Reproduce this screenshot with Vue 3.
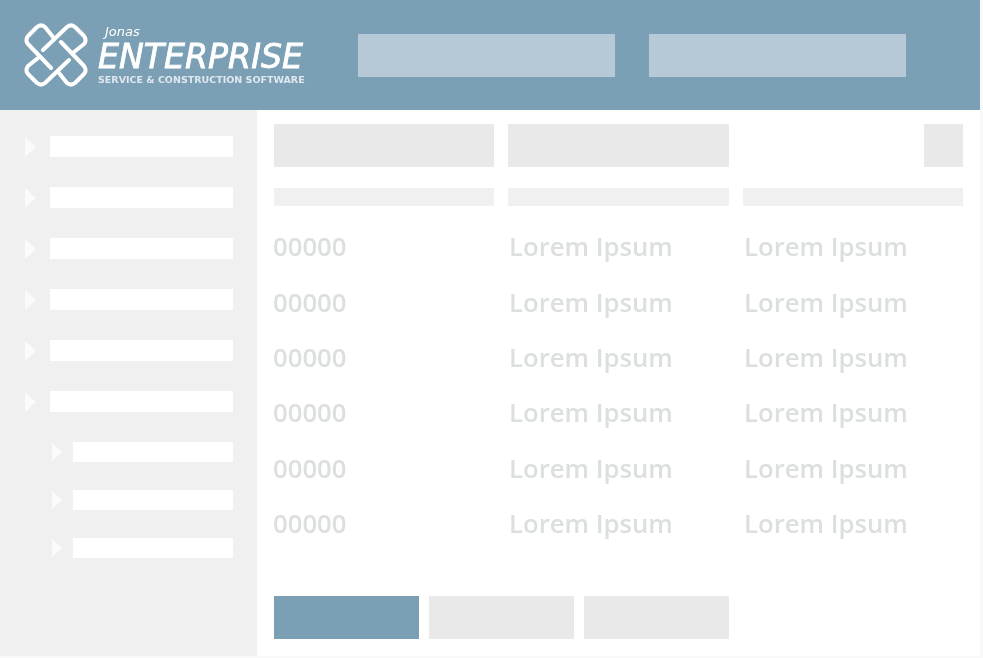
<script setup>
const sideItems = [1, 2, 3, 4, 5, 6];
const subItems = [1, 2, 3];
const rows = [1, 2, 3, 4, 5, 6];
const logoTurns = [0, 90, 180, 270];
</script>

<template>
  <div class="frame">
    <header class="topbar">
      <div class="brand">
        <svg class="logo" width="64" height="64" viewBox="0 0 64 64" fill="none" stroke="#fff" stroke-width="4" stroke-linecap="round" stroke-linejoin="round">
          <path v-for="t in logoTurns" :key="t" :transform="`rotate(${t} 32 32)`" d="M19 27 L43 4 Q47 0.8 51 4 L60 13 Q63.2 17 60 21 L50 29" />
        </svg>
        <div class="wordmark">
          <div class="jonas">Jonas</div>
          <div class="enterprise">ENTERPRISE</div>
          <div class="tagline">SERVICE &amp; CONSTRUCTION SOFTWARE</div>
        </div>
      </div>
      <div class="top-btn"></div>
      <div class="top-btn"></div>
    </header>
    <div class="body">
      <aside class="sidebar">
        <div v-for="i in sideItems" :key="i" class="side-item">
          <span class="arrow"></span>
          <span class="side-bar"></span>
        </div>
        <div class="sub-list">
          <div v-for="i in subItems" :key="i" class="sub-item">
            <span class="arrow small"></span>
            <span class="side-bar"></span>
          </div>
        </div>
      </aside>
      <main class="content">
        <div class="grid filters">
          <div class="box"></div>
          <div class="box"></div>
          <div class="box square"></div>
        </div>
        <div class="grid heads">
          <div class="head"></div>
          <div class="head"></div>
          <div class="head"></div>
        </div>
        <div class="rows">
          <div v-for="r in rows" :key="r" class="grid row">
            <span class="num">00000</span>
            <span>Lorem Ipsum</span>
            <span>Lorem Ipsum</span>
          </div>
        </div>
        <div class="actions">
          <div class="action primary"></div>
          <div class="action"></div>
          <div class="action"></div>
        </div>
      </main>
    </div>
  </div>
</template>

<style>
html, body {
  background: #f9f9f9;
}
</style>

<style scoped>
.frame {
  width: 980px;
  height: 656px;
  background: #fff;
  display: flex;
  flex-direction: column;
  overflow: hidden;
}

.topbar {
  height: 110px;
  flex: none;
  background: #7b9fb4;
  display: flex;
  align-items: center;
}

.brand {
  width: 358px;
  height: 100%;
  flex: none;
  display: flex;
  align-items: center;
  padding-left: 24px;
  box-sizing: border-box;
}

.logo {
  flex: none;
  filter: blur(0.4px);
}

.wordmark {
  margin-left: 10px;
  color: #fff;
  font-family: "DejaVu Sans", sans-serif;
  font-style: italic;
  filter: blur(0.4px);
}

.jonas {
  font-size: 13px;
  line-height: 16px;
  margin-left: 7px;
  margin-top: -1px;
  margin-bottom: 2px;
}

.enterprise {
  font-size: 33.2px;
  line-height: 30px;
  -webkit-text-stroke: 0.8px #fff;
}

.tagline {
  font-size: 9.5px;
  line-height: 13px;
  margin-top: 1px;
  font-style: normal;
  font-weight: 700;
  color: #dfe8ee;
  white-space: nowrap;
}

.top-btn {
  width: 257px;
  height: 43px;
  background: #b5cad6;
  margin-right: 34px;
}

.body {
  flex: 1;
  display: flex;
  min-height: 0;
}

.sidebar {
  width: 257px;
  flex: none;
  background: #f0f0f0;
  padding: 26px 24px 0 25px;
  box-sizing: border-box;
}

.side-item {
  height: 21px;
  margin-bottom: 30px;
  display: flex;
  align-items: center;
}

.arrow {
  width: 0;
  height: 0;
  flex: none;
  border-left: 11px solid #fbfbfb;
  border-top: 10px solid transparent;
  border-bottom: 10px solid transparent;
  margin-right: 14px;
}

.side-bar {
  flex: 1;
  height: 100%;
  background: #fff;
}

.sub-list {
  padding-left: 27px;
}

.sub-item {
  height: 20px;
  margin-bottom: 28px;
  display: flex;
  align-items: center;
}

.arrow.small {
  border-left-width: 10px;
  border-top-width: 9px;
  border-bottom-width: 9px;
  margin-right: 11px;
}

.content {
  flex: 1;
  padding: 14px 17px 0;
  display: flex;
  flex-direction: column;
}

.grid {
  display: grid;
  grid-template-columns: 220px 221px 220px;
  column-gap: 14px;
}

.filters .box {
  height: 43px;
  background: #e9e9e9;
}

.filters .square {
  width: 39px;
  justify-self: end;
}

.heads {
  margin-top: 21px;
}

.head {
  height: 18px;
  background: #f0f0f0;
}

.rows {
  margin-top: 13px;
  display: flex;
  flex-direction: column;
}

.row {
  height: 55.4px;
  align-items: center;
  font-family: "Open Sans", sans-serif;
  font-size: 25.7px;
  font-weight: 600;
  color: #dcdfe0;
  filter: blur(0.4px);
}

.row span {
  margin-left: 1px;
}

.row .num {
  margin-left: -1px;
}

.actions {
  display: flex;
  gap: 10px;
  margin-top: 45px;
}

.action {
  width: 145px;
  height: 43px;
  background: #e9e9e9;
}

.action.primary {
  background: #7b9fb4;
}
</style>
